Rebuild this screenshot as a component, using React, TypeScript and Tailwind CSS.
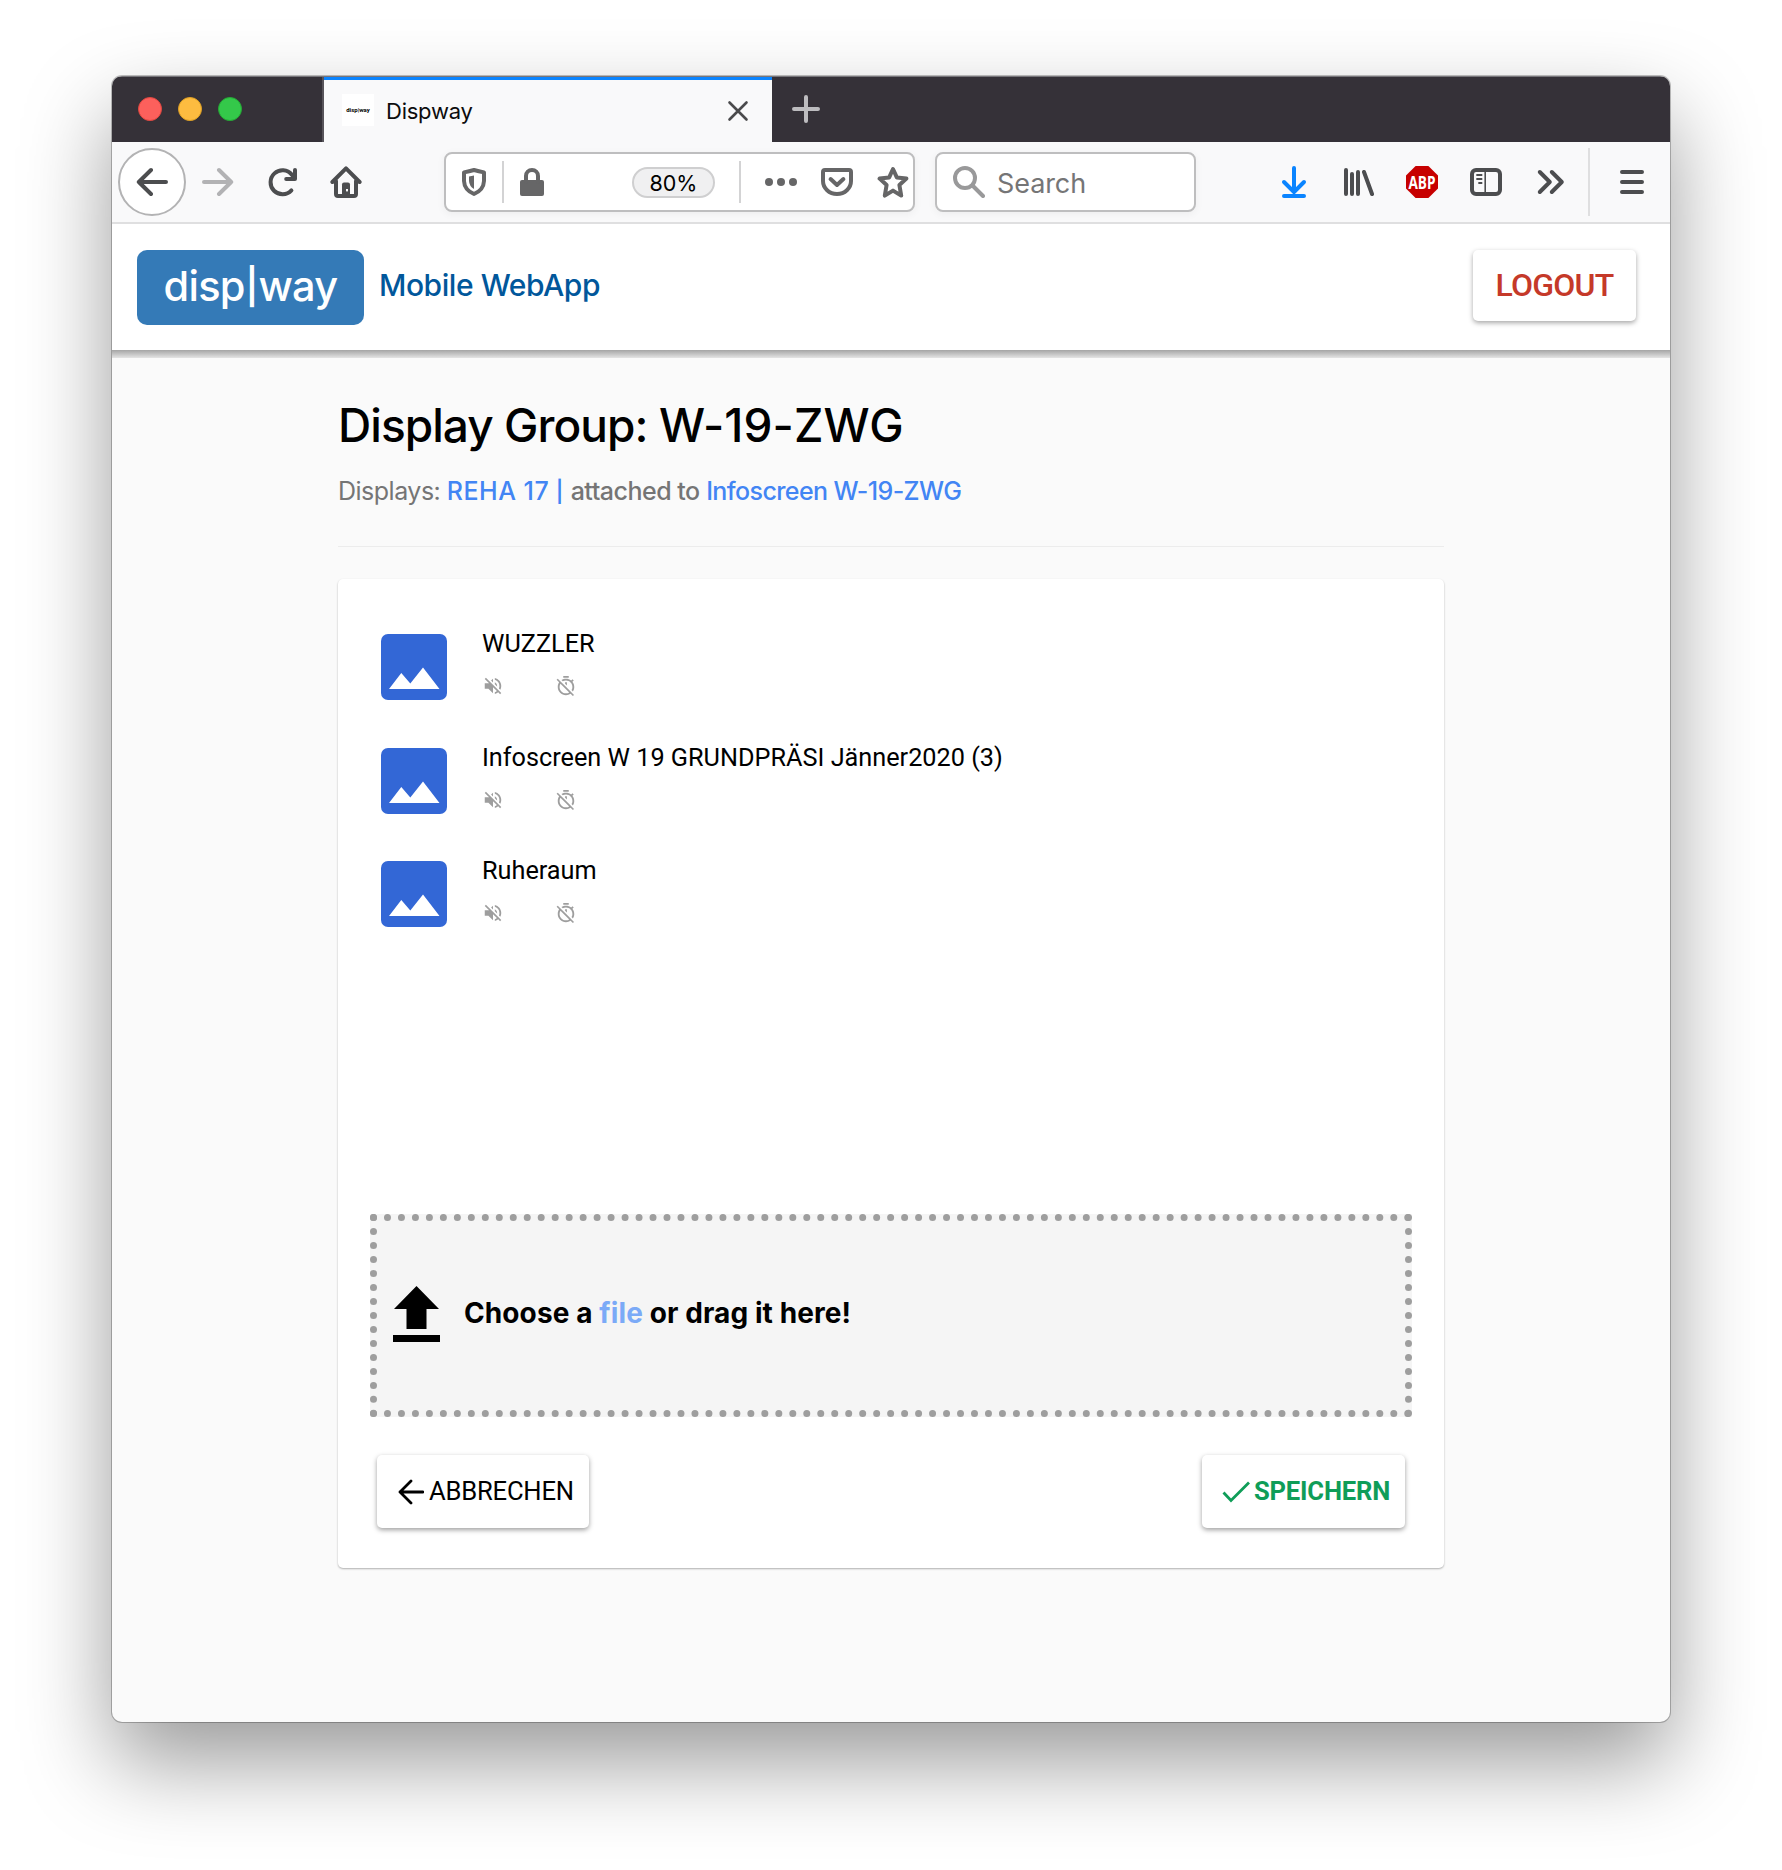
import React from "react";

const items = ["WUZZLER", "Infoscreen W 19 GRUNDPRÄSI Jänner2020 (3)", "Ruheraum"];

type IconProps = { className?: string; children: React.ReactNode; box?: string };
function Icon({ className = "", children, box = "0 0 16 16" }: IconProps) {
  return (
    <svg viewBox={box} className={"block shrink-0 " + className} fill="none" stroke="currentColor" strokeWidth="2" strokeLinecap="round" strokeLinejoin="round">
      {children}
    </svg>
  );
}

function TabBar() {
  return (
    <div className="flex h-[65px] bg-[#353138]">
      <div className="flex w-[212px] items-center gap-4 border-r-2 border-[#57545a] pb-[2px] pl-[26px]">
        <i className="size-6 rounded-full border border-[#e2463f] bg-[#fc605c]" />
        <i className="size-6 rounded-full border border-[#dfa023] bg-[#fdbc40]" />
        <i className="size-6 rounded-full border border-[#24aa35] bg-[#34c84a]" />
      </div>
      <div className="flex w-[448px] items-center border-t-[3px] border-[#0a84ff] bg-[#f9f9fa]">
        <div className="-mt-0.5 ml-[18px] flex size-8 items-center justify-center bg-white font-['Roboto',sans-serif] text-[6px] leading-none font-bold text-black">disp|way</div>
        <span className="ml-3 font-['Inter',sans-serif] text-[22px] leading-8 tracking-[-0.25px] text-[#0c0c0d]">Dispway</span>
        <Icon className="mr-[22px] ml-auto size-6 text-[#4a4a4c]" box="0 0 24 24"><path d="M3.500 3.500l17 17M20.500 3.500l-17 17" strokeWidth="2.6" /></Icon>
      </div>
      <Icon className="mt-[16px] ml-[18px] size-8 text-[#bdbcbf]" box="0 0 32 32"><path d="M16 4v24M4 16h24" strokeWidth="4" /></Icon>
    </div>
  );
}

function Toolbar() {
  return (
    <div className="flex h-[82px] items-center border-b-2 border-[#dfdfe0] bg-[#f9f9fa] text-[#4c4d4f]">
      <div className="ml-[6px] flex size-[68px] items-center justify-center rounded-full border-2 border-[#b3b3b4] bg-white">
        <Icon className="size-8"><path d="M15 8H1.4M7.5 2L1.4 8l6.1 6" /></Icon>
      </div>
      <Icon className="ml-4 size-8 text-[#b2b2b4]"><path d="M1 8h13.6M8.5 2l6.1 6-6.1 6" /></Icon>
      <Icon className="ml-[33px] size-8"><path d="M12.200 12.200A6 6 0 1 1 12.400 4.300L14 6.200M14 2v4.500H9.600" /></Icon>
      <Icon className="ml-[31px] size-8">
        <path d="M1.2 8L8 1.2 14.8 8M3 7.5V14a1 1 0 0 0 1 1h8a1 1 0 0 0 1-1V7.5" />
        <path d="M6 15V9.2q0-1 1-1h2q1 0 1 1V15z" fill="currentColor" stroke="none" />
        <rect x="8" y="11.500" width="1" height="1.200" fill="#f9f9fa" stroke="none" />
      </Icon>
      <div className="ml-[82px] flex h-[60px] w-[471px] items-center rounded-lg border-2 border-[#bebebf] bg-white text-[#666667] shadow-[0_2px_8px_rgba(0,0,0,0.05)]">
        <Icon className="ml-[12px] size-8">
          <path d="M3 3.2Q5.6 2.6 8 2q2.400.6 5 1.200V7.500Q12.800 12 8 14 3.200 12 3 7.500Z" />
          <path d="M8 4.700v6.800Q5.600 10 5.500 7.500V5.200Z" fill="currentColor" stroke="none" />
        </Icon>
        <i className="ml-[12px] h-[42px] w-0.5 bg-[#d3d3d4]" />
        <Icon className="ml-[12px] size-8">
          <rect x="2" y="7" width="12" height="8" rx="1" fill="currentColor" stroke="none" />
          <path d="M5 8V5a3 3 0 0 1 6 0v3" />
        </Icon>
        <div className="ml-[84px] flex h-[31px] w-[83px] items-center justify-center rounded-full border-2 border-[#cfcfd0] bg-[#f0f0f1] pt-[2px] font-['Inter',sans-serif] text-[21.500px] text-black">80%</div>
        <i className="ml-6 h-[42px] w-0.5 bg-[#d3d3d4]" />
        <Icon className="ml-6 size-8"><g fill="currentColor" stroke="none"><circle cx="2" cy="8" r="2" /><circle cx="8" cy="8" r="2" /><circle cx="14" cy="8" r="2" /></g></Icon>
        <Icon className="ml-6 size-8">
          <path d="M2 2h12a1 1 0 0 1 1 1v4.500a7 6.500 0 0 1-14 0V3a1 1 0 0 1 1-1z" />
          <path d="M4.800 6.500L8 9.500l3.200-3" />
        </Icon>
        <Icon className="ml-6 size-8"><path d="M8 1.500l1.900 4.200 4.800.6-3.500 3.200.9 5.300L8 12.300l-4.100 2.500.9-5.300L1.300 6.300l4.800-.6z" /></Icon>
      </div>
      <div className="ml-5 flex h-[60px] w-[261px] items-center rounded-lg border-2 border-[#bebebf] bg-white shadow-[0_2px_8px_rgba(0,0,0,0.05)]">
        <Icon className="ml-4 size-8 text-[#99999a]"><circle cx="6" cy="6" r="5" /><path d="M10 10l5 5" /></Icon>
        <span className="ml-[12px] pt-1 font-['Inter',sans-serif] text-[27px] tracking-[-0.1px] text-[#757576]">Search</span>
      </div>
      <div className="ml-[82px] flex items-center gap-8">
        <Icon className="size-8 text-[#0a84ff]"><path d="M8 1v11.500M3 8l5 5 5-5M3 15h10" /></Icon>
        <Icon className="size-8"><path d="M2 2v12M5 4v10M8 3v11M11 3l4 11" /></Icon>
        <div className="flex size-8 items-center justify-center bg-[#c70000] font-['Open_Sans',sans-serif] text-[17px] leading-none font-bold text-white [clip-path:polygon(30%_0,70%_0,100%_30%,100%_70%,70%_100%,30%_100%,0_70%,0_30%)]"><span className="scale-x-80">ABP</span></div>
        <Icon className="size-8"><rect x="1" y="2" width="14" height="12" rx="2" /><path d="M7.600 2v12" strokeWidth=".8" /><path d="M3.500 4.500h2.300M3.500 6.500h2.300M4.500 8.500h1.300" strokeWidth=".9" /></Icon>
        <Icon className="size-8"><path d="M3 3l5 5-5 5M9 3l5 5-5 5" transform="translate(-.1 0)" /></Icon>
      </div>
      <i className="ml-[22px] h-[68px] w-0.5 bg-[#dfdfe0]" />
      <Icon className="ml-[26px] size-8"><path d="M3 3h10M3 8h10M3 13h10" /></Icon>
    </div>
  );
}

function FileItem({ name }: { name: string }) {
  return (
    <div className="flex h-[113.500px] items-start">
      <svg viewBox="0 0 66 66" className="size-[66px]">
        <rect width="66" height="66" rx="7" fill="#3367d6" />
        <path d="M8 55L20.300 39l9 10.500L42 33.500 58.500 55z" fill="white" />
      </svg>
      <div className="ml-[35px] font-['Roboto',sans-serif] text-[25.250px] leading-[30px] text-black">
        <div className="-mt-[5px] whitespace-nowrap">{name}</div>
        <div className="mt-[16px] flex gap-[51px] text-[#9e9e9e]">
          <svg viewBox="0 0 24 24" className="size-[22px]" fill="currentColor"><path d="M16.500 12c0-1.770-1.020-3.290-2.500-4.030v2.210l2.450 2.450c.03-.2.050-.41.050-.63zm2.500 0c0 .94-.2 1.820-.54 2.640l1.510 1.510C20.630 14.910 21 13.500 21 12c0-4.280-2.990-7.860-7-8.770v2.060c2.890.86 5 3.540 5 6.710zM4.270 3L3 4.270 7.730 9H3v6h4l5 5v-6.730l4.250 4.250c-.67.520-1.420.93-2.250 1.180v2.060c1.380-.31 2.630-.95 3.690-1.810L19.730 21 21 19.730l-9-9L4.270 3zM12 4L9.910 6.090 12 8.180V4z" /></svg>
          <svg viewBox="0 0 24 24" className="size-[22px]" fill="currentColor"><path d="M19.040 4.550l-1.420 1.420C16.070 4.740 14.120 4 12 4c-1.830 0-3.530.55-4.950 1.480l1.460 1.460C9.530 6.350 10.730 6 12 6c3.870 0 7 3.130 7 7 0 1.270-.35 2.470-.94 3.490l1.450 1.450C20.450 16.530 21 14.830 21 13c0-2.120-.74-4.070-1.970-5.610l1.420-1.420-1.410-1.420zM15 1H9v2h6V1zm-4 8.440l2 2V8h-2v1.440zM3.020 4L1.750 5.270 4.500 8.030C3.550 9.450 3 11.160 3 13c0 4.970 4.020 9 9 9 1.840 0 3.550-.55 4.980-1.500l2.500 2.500 1.270-1.270-7.710-7.710L3.020 4zM12 20c-3.870 0-7-3.130-7-7 0-1.280.35-2.480.95-3.520l9.560 9.560c-1.030.61-2.230.96-3.510.96z" /></svg>
        </div>
      </div>
    </div>
  );
}

export default function App() {
  return (
    <div className="h-[1870px] w-[1782px] overflow-hidden bg-white pt-[76px] pl-[112px]">
      <div className="flex h-[1646px] w-[1558px] flex-col overflow-hidden rounded-[10px] bg-[#fafafa] shadow-[0_0_0_1px_rgba(0,0,0,0.24),0_40px_88px_rgba(0,0,0,0.4)]">
        <div className="h-px bg-[#77757a]" />
        <TabBar />
        <Toolbar />
        <header className="flex h-[126px] shrink-0 items-start bg-white pt-[26px] pr-[34px] pl-[25px]">
          <div className="flex h-[75px] w-[227px] items-center justify-center rounded-[10px] bg-[#347ab7] pb-0.5 font-['Inter',sans-serif] text-[41.500px] font-[450] tracking-[-0.700px] text-white"><span>disp<span className="inline-block scale-y-85">|</span>way</span></div>
          <span className="ml-[15px] pt-[14px] font-['Inter',sans-serif] text-[30px] leading-[42px] font-[450] tracking-[-0.450px] text-[#01579b]">Mobile WebApp</span>
          <button className="ml-auto flex h-[71px] w-[163px] items-center justify-center rounded-[5px] bg-white pb-[2px] font-['Roboto',sans-serif] text-[32px] font-medium tracking-[-0.800px] text-[#c53929] shadow-[0_2px_5px_rgba(0,0,0,0.35)]">LOGOUT</button>
        </header>
        <div className="h-2 shrink-0 bg-linear-to-b from-[#a5a5a5] to-[#e4e4e4]" />
        <main className="ml-[226px] w-[1106px] text-black">
          <h1 className="mt-[37px] font-['Inter',sans-serif] text-[46px] leading-[60px] font-medium tracking-[-0.950px] whitespace-nowrap">Display Group: <span className="tracking-[0.100px]">W-19-ZWG</span></h1>
          <p className="mt-[19px] font-['Inter',sans-serif] text-[25px] leading-[34px] tracking-[-0.500px] whitespace-nowrap text-[#757575]">Displays: <span className="font-[450] tracking-[0.200px] text-[#4285f4]"><span className="tracking-[0.500px]">REHA 17</span><span className="ml-[6px] inline-block scale-y-85">|</span></span> <span className="font-[450]">attached to</span> <span className="font-[450] tracking-[-0.600px] text-[#4285f4]">Infoscreen W-19-ZWG</span></p>
          <hr className="mt-[38px] border-t border-[#ececec]" />
          <section className="mt-[32px] h-[989px] rounded-[5px] bg-white px-8 pt-[55px] shadow-[0_1px_2px_rgba(0,0,0,0.3)]">
            <div className="h-[580px] pl-[11px]">
              {items.map((name) => <FileItem key={name} name={name} />)}
            </div>
            <div className="flex h-[203px] items-center border-[7px] border-dotted border-[#9e9e9e] bg-[#f5f5f5] pl-[16px]">
              <svg viewBox="0 0 47 56" className="-mt-1 h-[56px] w-[47px]"><path d="M23.500 0L46 23H33.500v20h-20V23H1zM0 49h47v7H0z" /></svg>
              <p className="-mt-[5px] ml-[24px] font-['Inter',sans-serif] text-[28px] font-bold tracking-[0.100px] whitespace-nowrap">Choose a <span className="text-[#7baaf7]">file</span> or drag it here!</p>
            </div>
            <div className="mt-[38px] flex justify-between px-[7px] font-['Roboto',sans-serif] text-[25.600px]">
              <button className="flex h-[73px] w-[212px] items-center rounded-[5px] bg-white pl-[21px] shadow-[0_2px_5px_rgba(0,0,0,0.38)]">
                <Icon className="size-[26px]" box="0 0 26 26"><path d="M25 13H2M13 2L2 13l11 11" strokeWidth="2.800" /></Icon>
                <span className="ml-[5px] tracking-[-0.200px]">ABBRECHEN</span>
              </button>
              <button className="flex h-[73px] w-[203px] items-center rounded-[5px] bg-white pl-[20px] text-[#0f9d58] shadow-[0_2px_5px_rgba(0,0,0,0.38)]">
                <Icon className="size-7" box="0 0 28 28"><path d="M1.500 14.500l7.500 8L27 4.500" strokeWidth="2.800" strokeLinecap="butt" strokeLinejoin="miter" /></Icon>
                <span className="ml-[4px] font-bold tracking-[-0.200px]">SPEICHERN</span>
              </button>
            </div>
          </section>
        </main>
      </div>
    </div>
  );
}
